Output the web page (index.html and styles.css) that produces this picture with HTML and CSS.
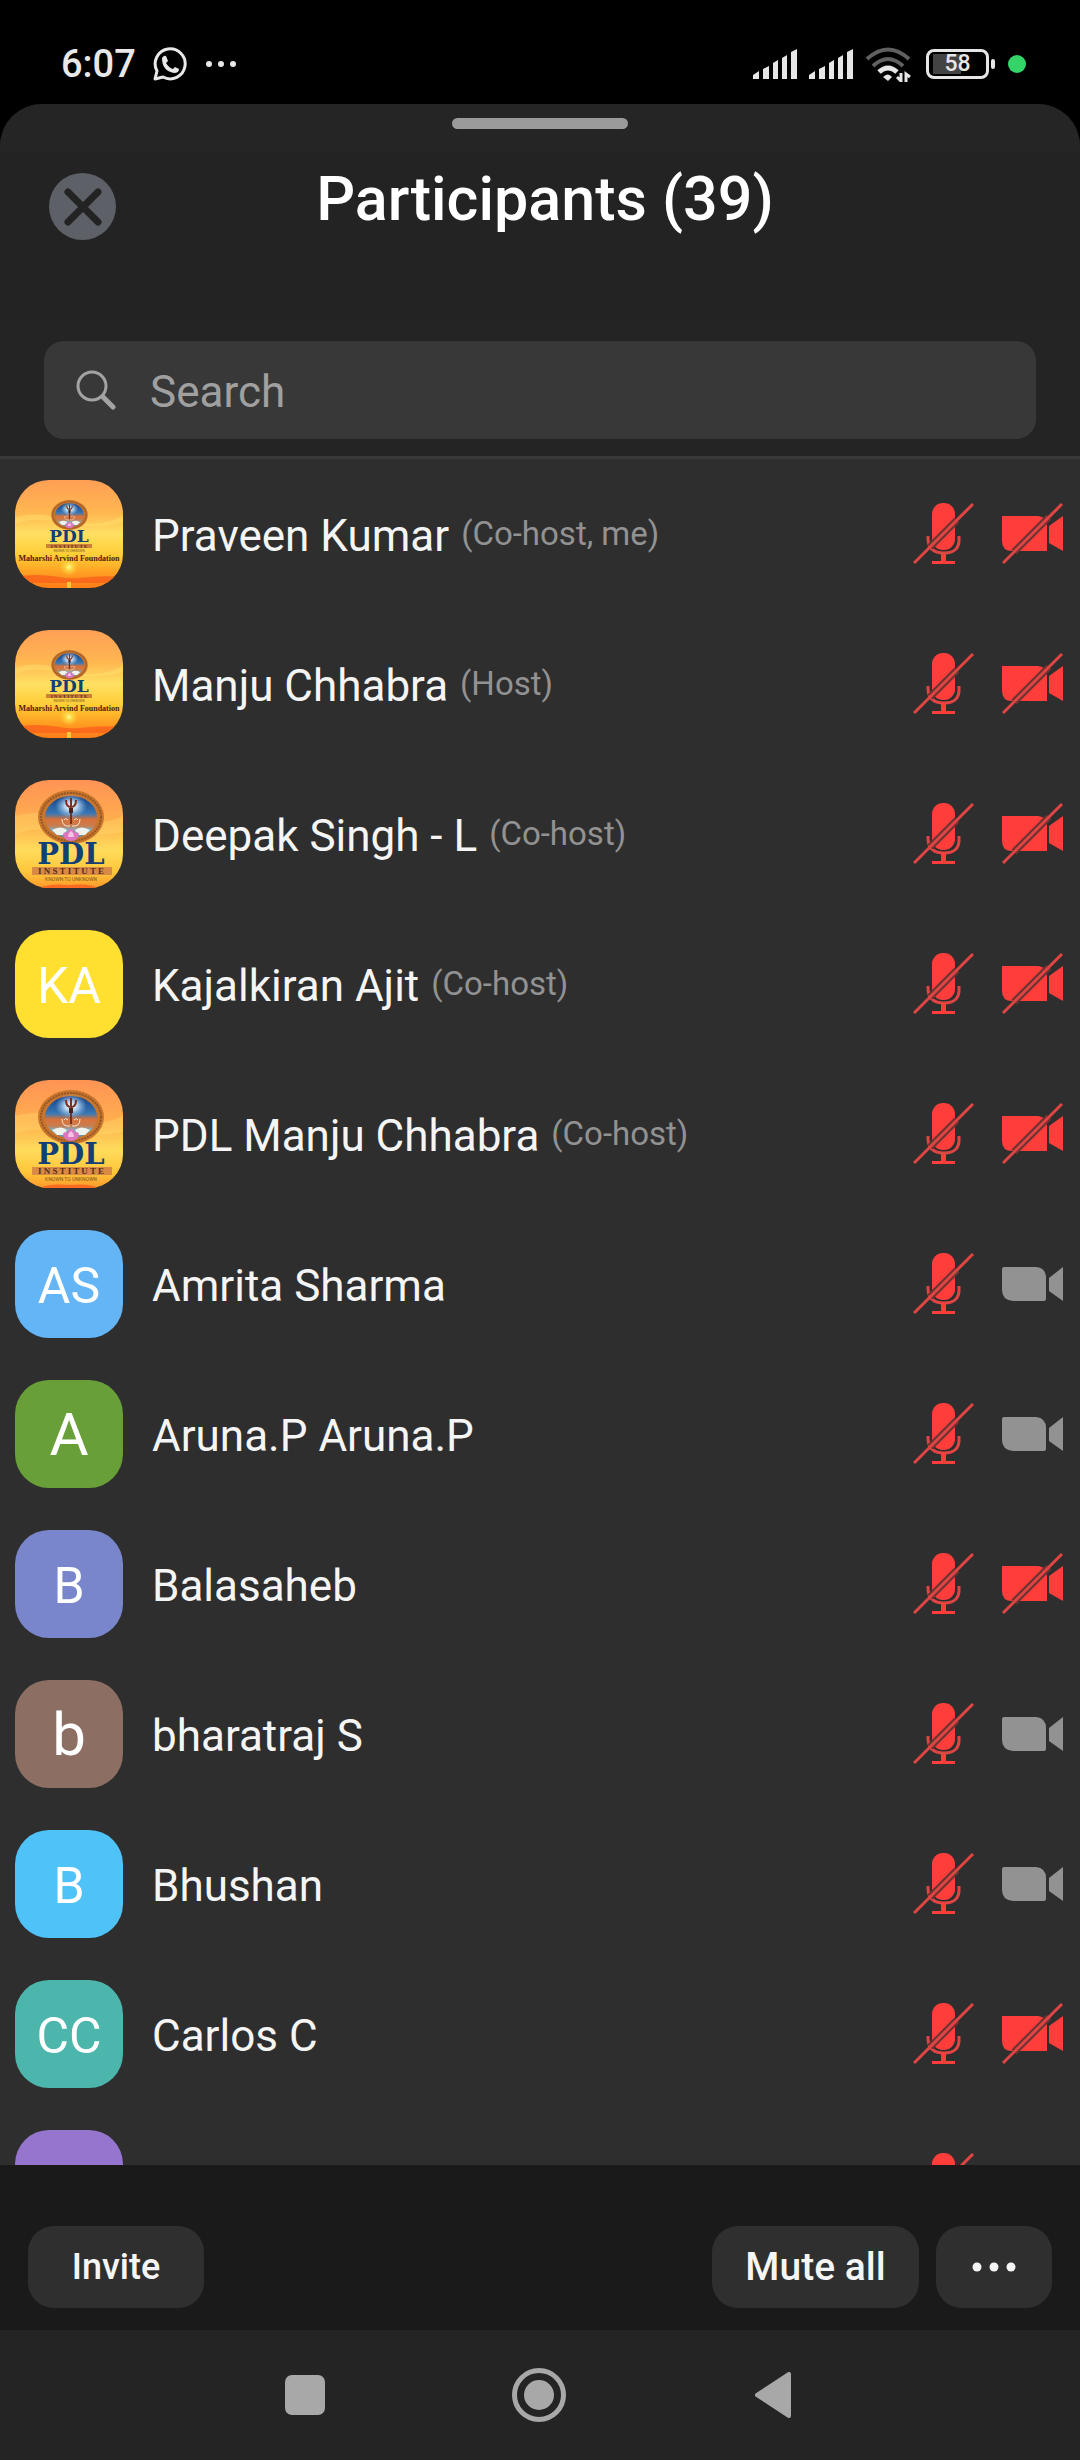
FILE: index.html
```html
<!DOCTYPE html>
<html lang="en">
<head>
<meta charset="utf-8">
<meta name="viewport" content="width=device-width, initial-scale=1">
<title>Participants</title>
<link rel="stylesheet" href="styles.css">
</head>
<body>
<svg class="defs" aria-hidden="true">
  <defs>
    <linearGradient id="sky" x1="0" y1="0" x2="0" y2="1">
      <stop offset="0" stop-color="#ff9f55"/><stop offset=".3" stop-color="#ffb750"/><stop offset=".5" stop-color="#ffe062"/><stop offset=".7" stop-color="#ffcc34"/><stop offset=".88" stop-color="#ff9a20"/><stop offset="1" stop-color="#ff7d18"/>
    </linearGradient>
    <linearGradient id="sky2" x1="0" y1="0" x2="0" y2="1">
      <stop offset="0" stop-color="#ff9355"/><stop offset=".4" stop-color="#ffb04e"/><stop offset=".65" stop-color="#ffdc5c"/><stop offset=".85" stop-color="#ffc63a"/><stop offset="1" stop-color="#ff9a2c"/>
    </linearGradient>
    <linearGradient id="emb" x1="0" y1="0" x2="0" y2="1">
      <stop offset="0" stop-color="#123f86"/><stop offset=".42" stop-color="#3a78b4"/><stop offset=".56" stop-color="#d9713a"/><stop offset=".72" stop-color="#c77f52"/><stop offset=".8" stop-color="#7fb0c0"/><stop offset="1" stop-color="#4c94ae"/>
    </linearGradient>
    <radialGradient id="glow"><stop offset="0" stop-color="#fff"/><stop offset=".4" stop-color="#cfe6fa" stop-opacity=".85"/><stop offset="1" stop-color="#8fc0ea" stop-opacity="0"/></radialGradient>
    <radialGradient id="sun"><stop offset="0" stop-color="#fff36a"/><stop offset="1" stop-color="#ffe040" stop-opacity="0"/></radialGradient>
    <symbol id="emblem" viewBox="0 0 66 54">
      <ellipse cx="33" cy="27" rx="33" ry="27" fill="#c9752c"/>
      <ellipse cx="33" cy="27" rx="30" ry="24" fill="none" stroke="#7c4a26" stroke-width="2" stroke-dasharray="2 1" opacity=".7"/>
      <ellipse cx="33" cy="27" rx="26" ry="21" fill="url(#emb)"/>
      <ellipse cx="33" cy="16" rx="16" ry="12" fill="url(#glow)"/>
      <path d="M33 8v26M28 10q0 7 5 7t5-7" fill="none" stroke="#74321f" stroke-width="2"/>
      <path d="M31 18h4v5h-4z" fill="#4b2119"/>
      <path d="M24 29q0 8 8 7M42 29q0 8-8 7M26 30q1-3 4 0M40 30q-1-3-4 0" fill="none" stroke="#f6e8dc" stroke-width="1"/>
      <path d="M14 40q9-5 15 0l-3 5h-7zM52 40q-9-5-15 0l3 5h7z" fill="#eef2ec"/>
      <path d="M25 45q0-4 4-2 1-4 4-4t4 4q4-2 4 2-2 6-8 6t-8-6z" fill="#dd76bd"/><path d="M30 47q0-4 3-6 3 2 3 6z" fill="#f7c3e4"/>
    </symbol>
    <symbol id="pdl-foundation" viewBox="0 0 108 108">
      <rect width="108" height="108" fill="url(#sky)"/>
      <path d="M0 38q20-8 50 2t58-4v6q-30 8-60 1T0 44z" fill="#fff07a" opacity=".3"/>
      <path d="M0 97q20-4 44 0 10 2 20 1 24-3 44-1v6H0z" fill="#f9621a" opacity=".8"/>
      <path d="M52 102h4v6h-4z" fill="#ffc53a"/>
      <circle cx="54" cy="87" r="9" fill="url(#sun)"/><circle cx="54" cy="87" r="2" fill="#fff27a"/>
      <use href="#emblem" x="36" y="20" width="37" height="30"/>
      <text x="54" y="62" class="logo-word" font-size="17">PDL</text>
      <rect x="31" y="64" width="46" height="4" fill="#cf8138"/>
      <text x="54" y="68" class="logo-band" font-size="5">I N S T I T U T E</text>
      <text x="54" y="72" class="logo-motto" font-size="3">KNOWN TO UNKNOWN</text>
      <text x="54" y="81" class="logo-foundation" font-size="8">Maharshi Arvind Foundation</text>
    </symbol>
    <symbol id="pdl-institute" viewBox="0 0 108 108">
      <rect width="108" height="108" fill="url(#sky2)"/>
      <path d="M0 36q30-8 56 2t52-2v16q-30 6-60 0T0 54z" fill="#fff07a" opacity=".25"/>
      <path d="M24 108q10-5 30-3 20-2 30 3z" fill="#fa6a20"/>
      <use href="#emblem" x="23" y="10" width="66" height="54"/>
      <text x="56" y="84" class="logo-word" font-size="29">PDL</text>
      <rect x="17" y="87" width="80" height="8" fill="#d98a44"/>
      <text x="56" y="94" class="logo-band" font-size="9">I N S T I T U T E</text>
      <text x="56" y="101" class="logo-motto" font-size="5">KNOWN TO UNKNOWN</text>
    </symbol>
    <symbol id="mic-slash" viewBox="0 0 61 61">
      <rect x="19" y="0" width="23" height="47" rx="11" fill="#ff3e3c"/>
      <path d="M15 33v2q0 15 16 15t15-15v-2" fill="none" stroke="#e04543" stroke-width="3"/>
      <path d="M28 50h5v8h9v3H19v-3h9z" fill="#ff3e3c"/>
      <path d="M17 44L44 17" stroke="#6b3231" stroke-width="7"/>
      <path d="M1 60L60 1" stroke="#e04543" stroke-width="3"/>
    </symbol>
    <symbol id="cam-off" viewBox="0 0 61 61">
      <path d="M0 13h36q9 1 9 10v25H10Q0 48 0 38zM47 23l14-10v35L47 40z" fill="#ff3e3c"/>
      <path d="M12 49L47 14" stroke="#6b3231" stroke-width="7"/>
      <path d="M1 60L60 1" stroke="#e04543" stroke-width="3"/>
    </symbol>
    <symbol id="cam-on" viewBox="0 0 61 61">
      <path d="M2 14h32q10 1 10 11v21q0 2-2 2H11Q0 47 0 37V16q0-2 2-2zM47 25l14-11v34L47 38z" fill="#929292"/>
    </symbol>
    <symbol id="bars" viewBox="0 0 44 30">
      <path d="M0 26l6-4v8H0zM10 20l6-3v13h-6zM20 14l5-3v19h-5zM29 9l5-3v24h-5zM38 3l6-3v30h-6z" fill="#e6e6e6"/>
    </symbol>
  </defs>
</svg>
<div class="screen">
  <div class="statusbar">
    <span class="clock">6:07</span>
    <svg class="whatsapp" width="34" height="34" viewBox="0 0 34 34" fill="none"><path d="M2 32l2-8A15 15 0 1 1 10 30z" stroke="#e8e8e8" stroke-width="3" stroke-linejoin="round"/><path d="M9 11q2-3 4-2l2 5-2 2q3 5 7 6l2-2 4 2q0 4-5 4Q9 24 9 11z" fill="#e8e8e8"/></svg>
    <svg class="more-dots" width="32" height="8" viewBox="0 0 32 8" fill="#e8e8e8"><circle cx="4" cy="4" r="3"/><circle cx="16" cy="4" r="3"/><circle cx="28" cy="4" r="3"/></svg>
    <div class="indicators">
      <svg width="44" height="30"><use href="#bars"/></svg>
      <svg width="44" height="30"><use href="#bars"/></svg>
      <svg width="46" height="36" viewBox="0 0 46 36" fill="none"><path d="M2 13Q23-6 44 13" stroke="#606060" stroke-width="4"/><path d="M8 20Q23 6 38 20" stroke="#606060" stroke-width="4"/><path d="M14 26q9-8 18 0" stroke="#e6e6e6" stroke-width="5"/><path d="M18 31q5-5 9 0l-4 4z" fill="#e6e6e6"/><path d="M36 27v8l-4-4M41 36v-8l4 3" stroke="#e6e6e6" stroke-width="3"/></svg>
      <span class="battery"><span class="battery-text">58</span></span>
      <span class="camera-dot"></span>
    </div>
  </div>
  <main class="sheet">
    <div class="grip"><span class="handle"></span></div>
    <header class="titlebar">
      <button class="close" aria-label="Close"><svg width="38" height="38" viewBox="0 0 38 38"><path d="M4 4l30 30M34 4L4 34" stroke="#232323" stroke-width="7" stroke-linecap="round"/></svg></button>
      <h1 class="title">Participants (39)</h1>
    </header>
    <div class="searchbar">
      <label class="search">
        <svg width="40" height="40" viewBox="0 0 40 40" fill="none" stroke="#a3a3a3"><circle cx="16" cy="16" r="14" stroke-width="3"/><path d="M27 27l10 10" stroke-width="5" stroke-linecap="round"/></svg>
        <input class="search-input" type="text" placeholder="Search" aria-label="Search">
      </label>
    </div>
    <ul class="list">
      <li class="row"><svg class="avatar" role="img" aria-label="PDL"><use href="#pdl-foundation"/></svg><span class="name">Praveen Kumar</span><span class="role">(Co-host, me)</span><span class="state"><svg><use href="#mic-slash"/></svg><svg><use href="#cam-off"/></svg></span></li>
      <li class="row"><svg class="avatar" role="img" aria-label="PDL"><use href="#pdl-foundation"/></svg><span class="name">Manju Chhabra</span><span class="role">(Host)</span><span class="state"><svg><use href="#mic-slash"/></svg><svg><use href="#cam-off"/></svg></span></li>
      <li class="row"><svg class="avatar" role="img" aria-label="PDL"><use href="#pdl-institute"/></svg><span class="name">Deepak Singh - L</span><span class="role">(Co-host)</span><span class="state"><svg><use href="#mic-slash"/></svg><svg><use href="#cam-off"/></svg></span></li>
      <li class="row"><span class="avatar yellow">KA</span><span class="name">Kajalkiran Ajit</span><span class="role">(Co-host)</span><span class="state"><svg><use href="#mic-slash"/></svg><svg><use href="#cam-off"/></svg></span></li>
      <li class="row"><svg class="avatar" role="img" aria-label="PDL"><use href="#pdl-institute"/></svg><span class="name">PDL Manju Chhabra</span><span class="role">(Co-host)</span><span class="state"><svg><use href="#mic-slash"/></svg><svg><use href="#cam-off"/></svg></span></li>
      <li class="row"><span class="avatar blue">AS</span><span class="name">Amrita Sharma</span><span class="state"><svg><use href="#mic-slash"/></svg><svg><use href="#cam-on"/></svg></span></li>
      <li class="row"><span class="avatar green large">A</span><span class="name">Aruna.P Aruna.P</span><span class="state"><svg><use href="#mic-slash"/></svg><svg><use href="#cam-on"/></svg></span></li>
      <li class="row"><span class="avatar indigo">B</span><span class="name">Balasaheb</span><span class="state"><svg><use href="#mic-slash"/></svg><svg><use href="#cam-off"/></svg></span></li>
      <li class="row"><span class="avatar brown large">b</span><span class="name">bharatraj S</span><span class="state"><svg><use href="#mic-slash"/></svg><svg><use href="#cam-on"/></svg></span></li>
      <li class="row"><span class="avatar sky">B</span><span class="name">Bhushan</span><span class="state"><svg><use href="#mic-slash"/></svg><svg><use href="#cam-on"/></svg></span></li>
      <li class="row"><span class="avatar teal">CC</span><span class="name">Carlos C</span><span class="state"><svg><use href="#mic-slash"/></svg><svg><use href="#cam-off"/></svg></span></li>
      <li class="row"><span class="avatar purple"></span><span class="state"><svg><use href="#mic-slash"/></svg><svg></svg></span></li>
    </ul>
    <footer class="actions">
      <button class="action invite">Invite</button>
      <button class="action mute">Mute all</button>
      <button class="action more" aria-label="More"><svg width="44" height="10" viewBox="0 0 44 10" fill="#f5f5f5"><circle cx="5" cy="5" r="4.5"/><circle cx="22" cy="5" r="4.5"/><circle cx="39" cy="5" r="4.5"/></svg></button>
    </footer>
  </main>
  <nav class="navbar">
    <button class="nav" aria-label="Recent apps"><svg width="40" height="40" viewBox="0 0 40 40"><rect width="40" height="40" rx="7" fill="#a8a8a8"/></svg></button>
    <button class="nav" aria-label="Home"><svg width="54" height="54" viewBox="0 0 54 54"><circle cx="27" cy="27" r="24.5" fill="none" stroke="#a8a8a8" stroke-width="5"/><circle cx="27" cy="27" r="15" fill="#a8a8a8"/></svg></button>
    <button class="nav" aria-label="Back"><svg width="38" height="46" viewBox="0 0 38 46"><path d="M3 23L35 2v42z" fill="#a8a8a8" stroke="#a8a8a8" stroke-width="4" stroke-linejoin="round"/></svg></button>
  </nav>
</div>
</body>
</html>
```
FILE: styles.css
```css
* { box-sizing: border-box; }
body { margin: 0; background: #000; color: #f5f5f5; font-family: Roboto, "Liberation Sans", sans-serif; }
button { border: 0; padding: 0; background: none; color: inherit; font: inherit; display: flex; align-items: center; justify-content: center; }
svg { display: block; flex: none; }
.defs { position: absolute; width: 0; height: 0; }

.screen { height: 100vh; display: flex; flex-direction: column; }

.statusbar { flex: none; height: 104px; padding: 24px 54px 0 61px; display: flex; align-items: center; }
.clock { font-size: 38px; font-weight: 500; line-height: 48px; color: #e8e8e8; }
.whatsapp { margin-left: 17px; }
.more-dots { margin-left: 18px; }
.indicators { margin-left: auto; display: flex; align-items: center; gap: 12px; }
.battery { position: relative; width: 63px; height: 30px; border: 3px solid #e6e6e6; border-radius: 8px; margin: 0 7px 0 3px; display: flex; align-items: center; justify-content: center; background: linear-gradient(#434343, #434343) 4px 2px / 28px 20px no-repeat; }
.battery::after { content: ""; position: absolute; right: -9px; top: 7px; width: 4px; height: 10px; border-radius: 2px; background: #e6e6e6; }
.battery-text { font-size: 23px; line-height: 24px; font-weight: 500; color: #e6e6e6; }
.camera-dot { width: 18px; height: 18px; border-radius: 50%; background: #35d468; }

.sheet { flex: 1; min-height: 0; display: flex; flex-direction: column; background: #232323; border-radius: 42px 42px 0 0; overflow: hidden; }
.grip { flex: none; height: 49px; padding-top: 14px; background: #252525; display: flex; justify-content: center; }
.handle { width: 176px; height: 11px; border-radius: 6px; background: #9b9b9b; }
.titlebar { flex: none; height: 167px; padding: 20px 48px 0 49px; display: grid; grid-template-columns: 67px 1fr 58px; align-items: start; }
.close { width: 67px; height: 67px; border-radius: 50%; background: #5d6066; }
.title { margin: 0; font-size: 61px; line-height: 52px; font-weight: 500; color: #fff; text-align: center; }
.searchbar { flex: none; padding: 21px 44px 17px; background: #242424; border-bottom: 3px solid #383838; }
.search { height: 98px; padding: 0 32px; border-radius: 20px; background: #383838; display: flex; align-items: center; gap: 34px; }
.search-input { flex: 1; min-width: 0; height: 64px; border: 0; padding: 4px 0 0; background: none; outline: none; color: #f5f5f5; font: 400 44px/60px Roboto, "Liberation Sans", sans-serif; }
.search-input::placeholder { color: #a0a0a0; opacity: 1; }

.list { flex: 1; min-height: 0; overflow: hidden; margin: 0; padding: 0; list-style: none; background: #2e2e2e; }
.row { height: 150px; padding: 0 17px 0 15px; display: flex; align-items: center; }
.avatar { flex: none; width: 108px; height: 108px; border-radius: 34px; overflow: hidden; margin-right: 29px; padding-top: 4px; display: flex; align-items: center; justify-content: center; color: #fff; font-size: 50px; line-height: 56px; }
svg.avatar { padding: 0; }
.large { font-size: 60px; padding-top: 2px; }
.yellow { background: #ffe031; }
.blue { background: #64b5f6; }
.green { background: #689f38; }
.indigo { background: #7986cb; }
.brown { background: #8d6e63; }
.sky { background: #4fc3f7; }
.teal { background: #4db6ac; }
.purple { background: #9575cd; }
.name { padding-top: 4px; font-size: 44px; line-height: 52px; }
.role { margin-left: 12px; font-size: 33px; line-height: 52px; color: #929292; }
.state { margin-left: auto; padding-bottom: 2px; display: flex; gap: 28px; }
.state svg { width: 61px; height: 61px; }
.logo-word { font-family: "DejaVu Serif", serif; font-weight: 700; fill: #123f78; text-anchor: middle; }
.logo-band { font-family: "Liberation Serif", serif; font-weight: 700; fill: #5a2c1c; text-anchor: middle; }
.logo-motto { font-family: Roboto, sans-serif; fill: #7a5520; text-anchor: middle; }
.logo-foundation { font-family: "Liberation Serif", serif; font-weight: 700; fill: #54200e; text-anchor: middle; }

.actions { flex: none; height: 165px; padding: 61px 28px 0; background: #1a1a1a; display: flex; align-items: flex-start; gap: 17px; }
.action { height: 82px; border-radius: 26px; background: #2f2f2f; font-weight: 500; line-height: 48px; }
.invite { width: 176px; font-size: 36px; margin-right: auto; }
.mute { width: 207px; font-size: 39px; }
.more { width: 116px; }

.navbar { flex: none; height: 130px; padding: 0 190px 0 188px; background: #242424; display: grid; grid-template-columns: repeat(3, 1fr); align-items: center; }
.nav { height: 60px; }
```
